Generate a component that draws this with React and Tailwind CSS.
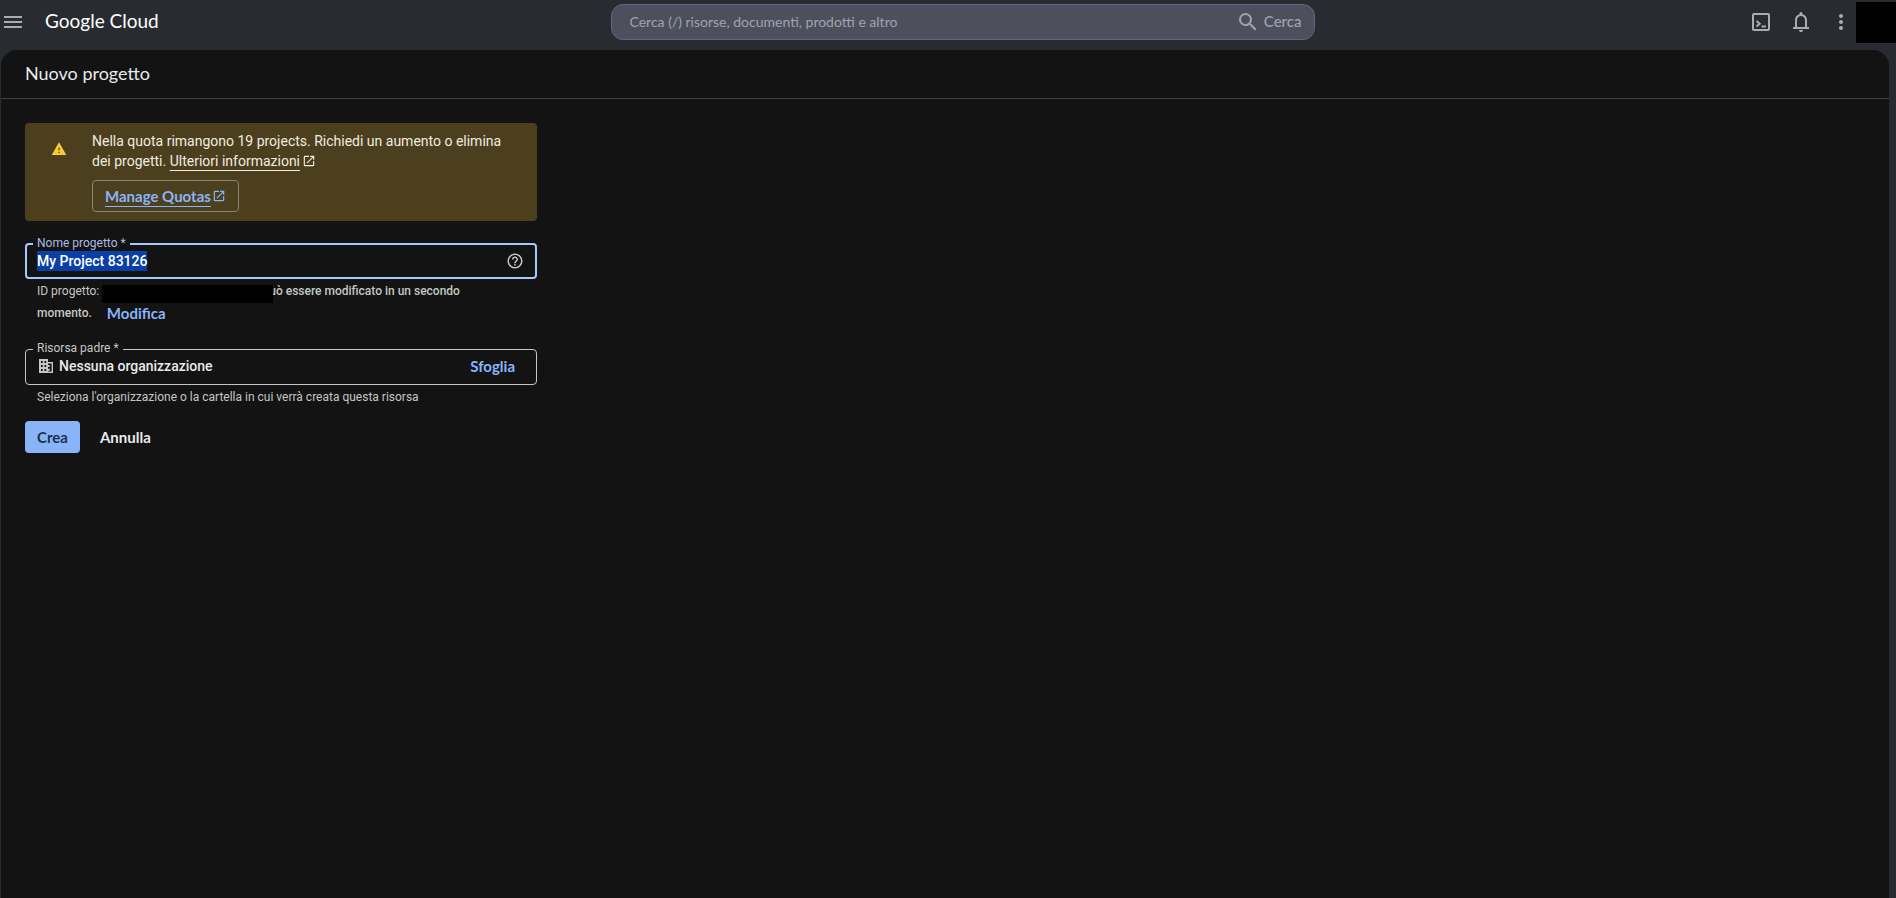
import { useState } from "react";
import {
  MdHelpOutline,
  MdMenu,
  MdMoreVert,
  MdOpenInNew,
  MdSearch,
  MdWarning,
} from "react-icons/md";

function TerminalIcon() {
  return (
    <svg width="24" height="24" viewBox="0 0 24 24" fill="none" stroke="currentColor">
      <rect x="4" y="4" width="16" height="16" rx="1" strokeWidth="2" />
      <path d="M7.5 11l3.2 2.8-3.2 2.8" strokeWidth="2" />
      <path d="M12.5 16.5h4.5" strokeWidth="2" />
    </svg>
  );
}

function BellIcon() {
  return (
    <svg width="24" height="24" viewBox="0 -960 960 960" fill="currentColor">
      <path d="M160-200v-80h80v-280q0-83 50-147.5T420-792v-28q0-25 17.5-42.5T480-880q25 0 42.5 17.5T540-820v28q80 20 130 84.5T720-560v280h80v80H160Zm320 120q-33 0-56.5-23.5T400-160h160q0 33-23.5 56.5T480-80ZM320-280h320v-280q0-66-47-113t-113-47q-66 0-113 47t-47 113v280Z" />
    </svg>
  );
}

function OrganizationIcon() {
  return (
    <svg width="14" height="14" viewBox="0 0 14 14" fill="currentColor" className="mr-[6px] ml-[2px]">
      <path
        fillRule="evenodd"
        d="M0 0h9v3h5v11H0zM2 2v2h1.700V2zM5.500 2v2h1.700V2zM2 6v2h1.700V6zM5.500 6v2h1.700V6zM2 10v2h1.700v-2zM5.500 10v2h1.700v-2zM9 4.500v1.500h1.800v2H9v1.800h1.800v2H9v.8h3.600V4.500z"
      />
    </svg>
  );
}

function Header() {
  return (
    <header className="flex h-[50px] items-start text-[#a8adb5]">
      <div className="flex h-11 flex-1 items-center gap-5 pl-[1px]">
        <button type="button" aria-label="Menu">
          <MdMenu size={24} />
        </button>
        <a href="#" className="pb-[2px] font-['Lato',sans-serif] text-[19px] leading-6 text-white">
          Google Cloud
        </a>
      </div>

      <form
        role="search"
        onSubmit={(e) => e.preventDefault()}
        className="mt-1 ml-7 flex h-9 w-[704px] items-center rounded-xl border border-[#60638a] bg-[#4d505c] pr-3 pl-[18px] font-['Lato',sans-serif] text-sm"
      >
        <input
          type="search"
          aria-label="Cerca"
          placeholder="Cerca (/) risorse, documenti, prodotti e altro"
          className="min-w-0 flex-1 bg-transparent outline-none placeholder:text-[#a0a3b1]"
        />
        <button type="submit" className="flex items-center gap-1 text-[15px] font-medium text-[#a0a3b1]">
          <MdSearch size={24} />
          Cerca
        </button>
      </form>

      <div className="flex flex-1 items-start justify-end">
        <div className="flex h-11 items-center gap-4 pr-[3px]">
          <button type="button" aria-label="Cloud Shell">
            <TerminalIcon />
          </button>
          <button type="button" aria-label="Notifiche">
            <BellIcon />
          </button>
          <button type="button" aria-label="Altro">
            <MdMoreVert size={24} />
          </button>
        </div>
        <div className="mt-[2px] h-[41px] w-10 bg-black" />
      </div>
    </header>
  );
}

function QuotaBanner() {
  return (
    <div className="flex rounded bg-[#4c3f1d] pt-2 pb-[9px] pl-[26px] text-sm leading-5 text-[#f1ece0]">
      <MdWarning size={16} className="mt-[10px] mr-[25px] shrink-0 text-[#fcc934]" />
      <div>
        <p>
          Nella quota rimangono 19 projects. Richiedi un aumento o elimina
          <br />
          dei progetti.{" "}
          <a href="#" className="whitespace-nowrap">
            <span className="underline underline-offset-4">Ulteriori informazioni</span>
            <MdOpenInNew size={14} className="mb-[2px] ml-[2px] inline" />
          </a>
        </p>
        <a
          href="#"
          className="mt-[9px] inline-flex h-8 items-center gap-[1px] rounded border border-[#8a8677] px-3 font-['Lato',sans-serif] text-[15px] font-bold text-[#8ab4f8]"
        >
          <span className="underline underline-offset-4">Manage Quotas</span>
          <MdOpenInNew size={14} />
        </a>
      </div>
    </div>
  );
}

function App() {
  const [name, setName] = useState("My Project 83126");

  return (
    <div className="flex min-h-screen flex-col bg-[#282c30] font-['Roboto',sans-serif]">
      <Header />

      <main className="mr-[7px] ml-[1px] flex-1 rounded-t-2xl bg-[#131313]">
        <h1 className="border-b border-[#3c4043] pb-[2px] pl-6 font-['Lato',sans-serif] text-lg leading-[46px] text-[#e8eaed]">
          Nuovo progetto
        </h1>

        <form
          onSubmit={(e) => e.preventDefault()}
          className="ml-6 max-w-[512px] pt-6 text-xs leading-5 text-[#c4c7c5]"
        >
          <QuotaBanner />

          <fieldset className="mt-4 rounded border-2 border-[#a8c7fa] pr-[11px] pb-[6px] pl-[10px]">
            <legend className="-ml-1 px-1 pb-[2px] leading-3 text-[#a8bce6]">
              <label htmlFor="name">Nome progetto *</label>
            </legend>
            <div className="flex h-5 items-center">
              <input
                id="name"
                type="text"
                autoFocus
                value={name}
                onFocus={(e) => e.target.select()}
                onChange={(e) => setName(e.target.value)}
                className="min-w-0 flex-1 text-sm leading-5 font-medium text-[#e8eaed] outline-none selection:bg-[#0b3fa8] selection:text-white"
              />
              <button type="button" aria-label="Guida">
                <MdHelpOutline size={18} />
              </button>
            </div>
          </fieldset>
          <div className="mt-[2px] pl-3 leading-[21px] font-medium">
            <div className="flex">
              <span className="font-normal">ID progetto:</span>
              <span className="z-10 mt-1 ml-[3px] h-[18px] w-[171px] bg-black" />
              <span className="-ml-1">uò essere modificato in un secondo</span>
            </div>
            <div className="flex">
              momento.
              <button type="button" className="ml-[15px] font-['Lato',sans-serif] text-[15px] font-bold text-[#8ab4f8]">
                Modifica
              </button>
            </div>
          </div>

          <fieldset className="mt-[18px] rounded border border-[#c4c7c5] pr-[21px] pb-2 pl-[11px]">
            <legend className="-ml-1 px-1 pb-[2px] leading-3">Risorsa padre *</legend>
            <div className="flex h-5 items-center">
              <OrganizationIcon />
              <span className="flex-1 text-sm leading-5 font-medium text-[#e8eaed]">Nessuna organizzazione</span>
              <button type="button" className="font-['Lato',sans-serif] text-[15px] font-bold text-[#8ab4f8]">
                Sfoglia
              </button>
            </div>
          </fieldset>
          <p className="mt-[2px] pl-3">
            Seleziona l'organizzazione o la cartella in cui verrà creata questa risorsa
          </p>

          <div className="mt-[14px] flex gap-2 font-['Lato',sans-serif] text-[15px] font-bold">
            <button type="submit" className="h-8 rounded bg-[#8ab4f8] px-3 text-[#202f4d]">
              Crea
            </button>
            <button type="button" className="h-8 px-3 text-[#e8eaed]">
              Annulla
            </button>
          </div>
        </form>
      </main>
    </div>
  );
}

export default App;
